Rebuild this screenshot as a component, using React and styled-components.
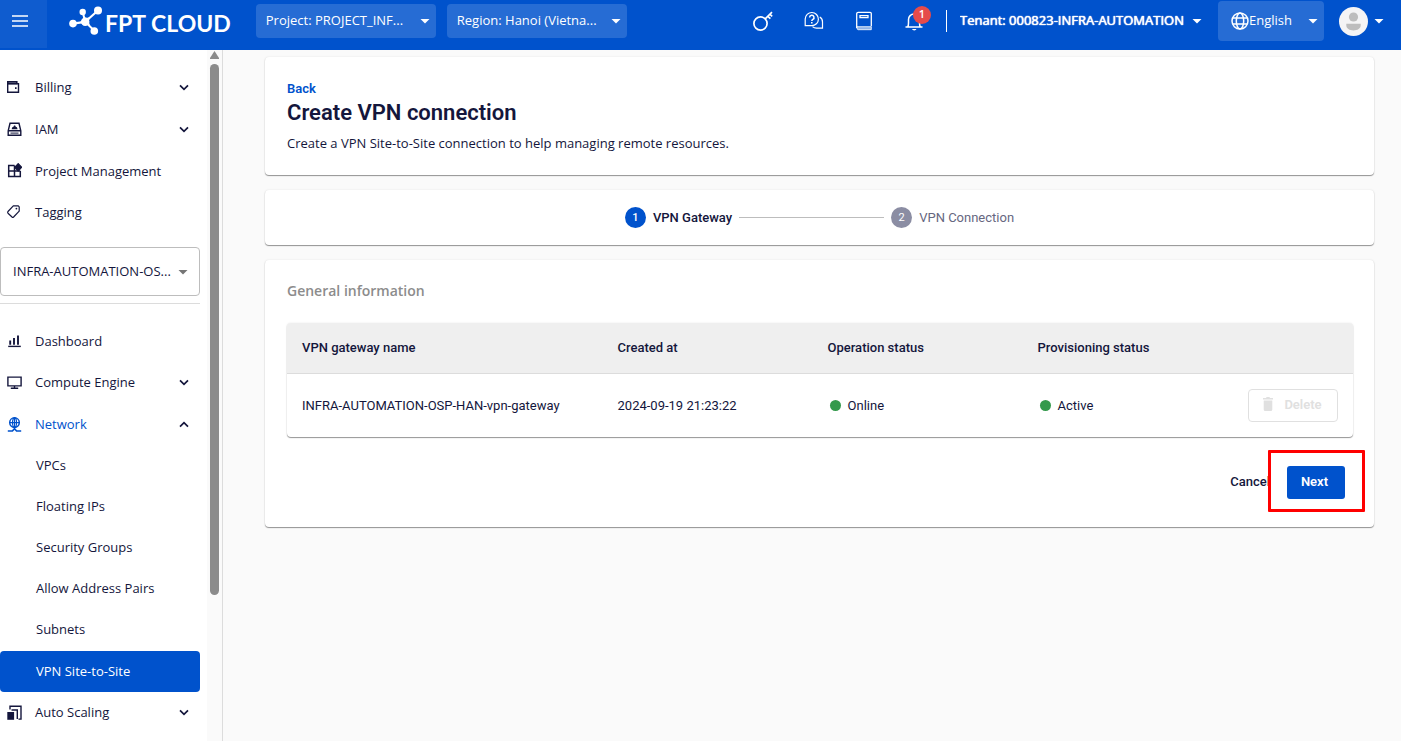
import React from "react";
import styled, { createGlobalStyle } from "styled-components";

const GlobalStyle = createGlobalStyle`
  * {
    box-sizing: border-box;
  }

  body {
    margin: 0;
    background: #fafafa;
    color: #14163c;
    font-family: "Open Sans", sans-serif;
    font-size: 13px;
  }

  button,
  select {
    font: inherit;
    color: inherit;
    margin: 0;
  }
`;

const Caret = ({ color = "#fff" }) => (
  <svg className="caret" width="10" height="5" viewBox="0 0 10 5" aria-hidden="true">
    <path d="M0.5 0h9L5 4.6z" fill={color} />
  </svg>
);

const Chevron = ({ up }) => (
  <svg width="10" height="7" viewBox="0 0 10 7" fill="none" stroke="#14163c" strokeWidth="1.7" aria-hidden="true">
    <path d={up ? "M1 5.6 5 1.6l4 4" : "M1 1.4l4 4 4-4"} />
  </svg>
);

const LogoMark = () => (
  <svg width="34" height="30" viewBox="0 0 34 30" aria-hidden="true">
    <g stroke="#fff" fill="none">
      <path d="M4 17.6 16 15.8" strokeWidth="2.2" />
      <path d="M13.7 6 16 15" strokeWidth="2" />
      <path d="M29 4.5 16.500 15.500" strokeWidth="2.2" />
      <path d="M16.500 16 25.500 25" strokeWidth="2" />
    </g>
    <g fill="#fff">
      <circle cx="4" cy="17.6" r="3.8" />
      <circle cx="13.7" cy="6" r="3.2" />
      <circle cx="29" cy="4.5" r="4" />
      <circle cx="25.3" cy="25" r="3.8" />
      <circle cx="16.200" cy="15.800" r="4.200" />
      <path d="M10.500 16.600l4-3.600.6-2.500 1.800 1.500 4.100-.8-1 3 .1 2.500.8 2.500-4.400-.2z" />
    </g>
  </svg>
);

const icons = {
  billing: (
    <>
      <path d="M0.700 1.700h9v2h-9z" fill="#a3a5b8" />
      <path d="M0.700 3.700v8.600h10.800V3.700z M0.700 3.700v-2h9v2" strokeWidth="1.4" />
      <path d="M8 7.300h1.600v1.600H8z" fill="currentColor" stroke="none" />
    </>
  ),
  iam: (
    <>
      <path d="M3 1.300h9l1.800 7.500v4.400H1.200V8.800z M1.200 8.800h12.600" strokeWidth="1.4" />
      <path d="M4.600 7.200 5.300 5.200l1.200-.4L7 3.400h1.200l.5 1.400 1.200.4.700 2z" fill="currentColor" stroke="none" />
      <path d="M3.500 11.100h8" strokeWidth="1" />
    </>
  ),
  project: (
    <>
      <path d="M7.500 2.500H1.700v11h11.600V8 M7.500 2.500v11 M1.700 8h11.600" strokeWidth="1.5" />
      <path d="M11.200.600l3.500 3.700-3.500 3.700-3.500-3.700z" fill="currentColor" strokeLinejoin="round" />
    </>
  ),
  tag: (
    <>
      <path d="M6.300 1.900h5l.9.900v4.400L6.600 13a1.200 1.200 0 0 1-1.600 0L1 9.200a1.400 1.400 0 0 1 0-1.700z" strokeLinejoin="round" />
      <circle cx="9.400" cy="4.600" r="0.900" fill="currentColor" stroke="none" />
    </>
  ),
  dashboard: (
    <>
      <path d="M1.200 13.400h12.600" strokeWidth="1.4" />
      <path d="M3.200 7.500v4.200M7 5v6.700M11 2.500v9.200" strokeWidth="1.9" />
    </>
  ),
  compute: (
    <>
      <path d="M.900 2.100h13.200v8.800H.900z" strokeWidth="1.4" />
      <path d="M7.500 11v2M3.800 13.300h7.400" strokeWidth="1.4" />
    </>
  ),
  network: (
    <>
      <circle cx="7.500" cy="5.600" r="4.800" strokeWidth="1.5" />
      <ellipse cx="7.500" cy="5.600" rx="2" ry="4.800" />
      <path d="M2.700 5.600h9.600M7.500.800v9.600" />
      <path d="M.800 14h4.600l2.100-2.300L9.600 14h4.600" strokeWidth="1.7" />
    </>
  ),
  scaling: (
    <>
      <path d="M3 4.500V1.300h11v12.800h-2.500" strokeWidth="1.4" />
      <path d="M4.500 5h5.800v9" strokeWidth="1.4" />
      <path d="M.300 7h6.800v7.800H.300z" fill="currentColor" stroke="none" />
    </>
  ),
};

const NavIcon = ({ name }) => (
  <svg width="15" height="15" viewBox="0 0 15 15" fill="none" stroke="currentColor" strokeWidth="1.2" aria-hidden="true">
    {icons[name]}
  </svg>
);

const KeyIcon = () => (
  <svg width="22" height="22" viewBox="0 0 22 22" fill="none" stroke="#fff" strokeWidth="1.7" aria-hidden="true">
    <circle cx="8.500" cy="13.500" r="6.600" />
    <path d="M13.200 8.800l6.800-6.600M15.800 6.300l2.600 2.400M18 4.300l2.200 2" />
  </svg>
);

const SupportIcon = () => (
  <svg width="20" height="20" viewBox="0 0 20 20" fill="none" stroke="#fff" strokeWidth="1.2" aria-hidden="true">
    <path d="M1.200 14.700V8a6.600 6.600 0 1 1 6.600 6.700z" />
    <path d="M5.600 6.400a2.200 2.200 0 1 1 3.300 1.900c-.7.400-1.100.8-1.100 1.600M7.800 11v1.500" strokeWidth="1.5" />
    <path d="M15.800 6.100a5.600 5.600 0 0 1 2.700 5v6.100h-5.700a6 6 0 0 1-4.300-1.600" />
  </svg>
);

const DocsIcon = () => (
  <svg width="18" height="20" viewBox="0 0 18 20" fill="none" stroke="#fff" strokeWidth="1.3" aria-hidden="true">
    <path d="M16.300 15.200V2.500a1.200 1.200 0 0 0-1.200-1.200H3.200A1.500 1.500 0 0 0 1.700 2.800v14.300" />
    <path d="M5 4.700h8v2H5z" />
    <path d="M2 15.700h14.300v3H3.200a1.500 1.500 0 0 1-1.200-1.500z" fill="#8fb3e8" strokeWidth="0.8" />
  </svg>
);

const BellIcon = () => (
  <svg width="20" height="20" viewBox="0 0 20 20" fill="none" stroke="#fff" strokeWidth="1.5" aria-hidden="true">
    <path d="M1.500 16h17M3.700 16c.6-1 .8-2 .8-4V8.500a5.500 5.500 0 0 1 11 0V12c0 2 .2 3 .8 4" />
    <path d="M8 18h4.500a2.300 1.800 0 0 1-4.500 0z" fill="#fff" stroke="none" />
  </svg>
);

const GlobeIcon = () => (
  <svg width="18" height="18" viewBox="0 0 18 18" fill="none" stroke="#fff" strokeWidth="1.5" aria-hidden="true">
    <circle cx="9" cy="9" r="8" />
    <ellipse cx="9" cy="9" rx="3.700" ry="8" />
    <path d="M1.800 6h14.400M1.800 12h14.400" />
  </svg>
);

const AvatarIcon = () => (
  <svg width="29" height="29" viewBox="0 0 29 29" aria-hidden="true">
    <circle cx="14.500" cy="14.500" r="14.500" fill="#f4f4f5" />
    <circle cx="14.500" cy="10" r="4.600" fill="#bdbdbd" />
    <path d="M7.300 16.700h14.400v1.600c0 3.200-3.200 5.200-7.200 5.200s-7.200-2-7.200-5.200z" fill="#bdbdbd" />
  </svg>
);

const TrashIcon = () => (
  <svg width="12" height="14" viewBox="0 0 12 14" fill="#e0e0e0" aria-hidden="true">
    <path d="M1 1h3l.6-1h2.800L8 1h3v1.600H1zM1.700 3.400h8.600V12.500A1.500 1.500 0 0 1 8.800 14H3.200a1.500 1.500 0 0 1-1.500-1.500z" />
  </svg>
);

const Header = styled.header`
  display: flex;
  align-items: flex-start;
  height: 50px;
  background: #0052cc;
  color: #fff;
`;

const MenuButton = styled.button`
  display: flex;
  align-items: center;
  justify-content: center;
  width: 47px;
  height: 48px;
  padding: 0 8px 6px 0;
  border: none;
  background: #0f5ccf;
`;

const Logo = styled.a`
  display: flex;
  align-items: center;
  gap: 2px;
  height: 42px;
  margin-left: 22px;
  color: #fff;
  font-family: Lato, sans-serif;
  font-size: 23px;
  font-weight: 700;
  line-height: 30px;
  text-decoration: none;
`;

const LogoText = styled.span`
  display: flex;
  gap: 5px;
  padding-top: 3px;
`;

const Filters = styled.div`
  display: flex;
  gap: 11px;
  margin: 4px 0 0 25px;
`;

const SelectBox = styled.label`
  position: relative;
  display: flex;
  align-items: center;
  width: ${(p) => p.$width || "auto"};
  height: ${(p) => p.$height || "34px"};
  padding-left: ${(p) => p.$inset || "0"};
  border-radius: 4px;
  background: ${(p) => (p.$filled ? "#266cd4" : "transparent")};

  select {
    flex: 1;
    min-width: 0;
    height: 100%;
    padding: 0 20px 2px 0;
    border: none;
    background: transparent;
    appearance: none;
  }

  option {
    color: #14163c;
  }

  .caret {
    position: absolute;
    right: 6px;
    top: 50%;
    margin-top: -2px;
    pointer-events: none;
  }
`;

const TenantSelect = styled(SelectBox)`
  select {
    text-shadow: 0 0 1px #fff, 0 0 1px #fff;
  }

  .caret {
    right: 2px;
  }
`;

const Tools = styled.div`
  display: flex;
  align-items: center;
  height: 42px;
  margin-left: auto;
`;

const IconRow = styled.div`
  display: flex;
  align-items: center;
  gap: 30px;
  padding-right: 22px;
  border-right: 1px solid #fff;
  height: 22px;
  margin-right: 13px;
`;

const IconButton = styled.button`
  position: relative;
  display: flex;
  align-items: center;
  justify-content: center;
  gap: 6px;
  min-width: 20px;
  padding: 0;
  border: none;
  background: none;
`;

const Badge = styled.span`
  position: absolute;
  top: -5px;
  right: -7px;
  width: 18px;
  height: 18px;
  border-radius: 50%;
  background: #e54b4b;
  color: #fff;
  font-size: 11px;
  font-weight: 600;
  line-height: 16px;
  text-align: center;
`;

const Account = styled.div`
  display: flex;
  align-items: center;
  gap: 15px;
  margin: 0 17px 0 14px;
`;

const Layout = styled.div`
  display: flex;
  height: calc(100vh - 50px);
`;

const Sidebar = styled.aside`
  display: flex;
  flex: none;
  border-right: 1px solid #dcdcdc;
  background: #fff;
  overflow: hidden;
`;

const Nav = styled.nav`
  width: 207px;
  padding: 17px 7px 0 0;
  overflow: hidden;
`;

const NavList = styled.ul`
  margin: 0;
  padding: 0;
  list-style: none;
`;

const NavRow = styled.a`
  display: flex;
  align-items: center;
  gap: 13px;
  width: 100%;
  height: ${(p) => (p.as === "button" ? "42px" : "41px")};
  padding: 0 11px 2px 7px;
  border: none;
  background: none;
  color: ${(p) => (p.$open ? "#0052cc" : "#14163c")};
  text-align: left;
  text-decoration: none;

  span {
    flex: 1;
  }
`;

const SubRow = styled(NavRow)`
  padding: 0 11px ${(p) => (p.$selected ? "2px" : "4px")} 36px;
  border-radius: 4px;
  background: ${(p) => (p.$selected ? "#0052cc" : "none")};
  color: ${(p) => (p.$selected ? "#fff" : "#14163c")};
`;

const ProjectSelect = styled(SelectBox)`
  height: 49px;
  margin: 14px 0 7px;
  padding-left: 12px;
  border: 1px solid #bdbdbd;

  .caret {
    right: 11px;
  }
`;

const Divider = styled.hr`
  margin: 0 0 17px;
  border: none;
  border-top: 1px solid #dcdcdc;
`;

const ScrollTrack = styled.div`
  display: flex;
  flex-direction: column;
  align-items: center;
  gap: 5px;
  width: 15px;
  padding-top: 1px;
  background: #fafafa;
`;

const ScrollThumb = styled.div`
  width: 9px;
  height: 77%;
  border-radius: 5px;
  background: #8b8b8b;
`;

const Main = styled.main`
  display: flex;
  flex: 1;
  flex-direction: column;
  gap: 15px;
  min-width: 0;
  padding: 7px 27px 20px 42px;
  font-family: Roboto, sans-serif;
`;

const Card = styled.section`
  padding: ${(p) => p.$padding};
  border-radius: 4px;
  background: #fff;
  box-shadow: 0 1px 1px rgba(0, 0, 0, 0.4), 0 0 2px rgba(0, 0, 0, 0.1);
`;

const BackLink = styled.a`
  display: block;
  color: #0052cc;
  font-weight: 600;
  line-height: 18px;
  text-decoration: none;
`;

const Title = styled.h1`
  margin: 0;
  font-size: 22px;
  font-weight: 600;
  line-height: 30px;
`;

const Description = styled.p`
  margin: 5px 0 0;
  font-family: "Open Sans", sans-serif;
  line-height: 20px;
`;

const Stepper = styled.ol`
  display: flex;
  align-items: center;
  justify-content: center;
  gap: 7px;
  margin: 0;
  padding: 0;
  list-style: none;
`;

const Step = styled.li`
  display: flex;
  align-items: center;
  gap: 7px;
  color: ${(p) => (p.$active ? "#14163c" : "#66677f")};
  font-weight: ${(p) => (p.$active ? 500 : 400)};

  span {
    width: 21px;
    height: 21px;
    border-radius: 50%;
    background: ${(p) => (p.$active ? "#0052cc" : "#8b8da3")};
    color: #fff;
    font-size: 11px;
    line-height: 21px;
    text-align: center;
  }
`;

const StepLine = styled.li`
  width: 145px;
  border-top: 1px solid #bdbdbd;
`;

const SectionTitle = styled.h2`
  margin: 0 0 22px;
  color: #8c8c8c;
  font-family: "Open Sans", sans-serif;
  font-size: 14px;
  font-weight: 600;
  line-height: 20px;
`;

const Table = styled.table`
  width: 100%;
  border-collapse: separate;
  border-spacing: 0;
  border-radius: 4px;
  table-layout: fixed;
  box-shadow: 0 1px 1px rgba(0, 0, 0, 0.4), 0 0 2px rgba(0, 0, 0, 0.1);
  overflow: hidden;

  th,
  td {
    padding: 0 15px 1px;
    text-align: left;
  }

  th {
    height: 51px;
    border-bottom: 1px solid #dcdcdc;
    background: #efefef;
    font-weight: 500;
  }

  td {
    height: 63px;
  }

  td:last-child {
    text-align: right;
  }
`;

const Status = styled.span`
  display: flex;
  align-items: center;
  gap: 7px;
  padding-left: 2px;

  &::before {
    content: "";
    width: 11px;
    height: 11px;
    border-radius: 50%;
    background: #34994c;
  }
`;

const DeleteButton = styled.button`
  display: inline-flex;
  align-items: center;
  justify-content: center;
  gap: 10px;
  width: 90px;
  height: 33px;
  padding: 0 2px 2px 0;
  border: 1px solid #e0e0e0;
  border-radius: 4px;
  background: #fff;
  color: #e0e0e0;
  font-weight: 600;
`;

const Actions = styled.div`
  display: flex;
  align-items: center;
  justify-content: flex-end;
  gap: 17px;
  margin-top: 29px;
  padding-right: 8px;
`;

const CancelButton = styled.button`
  padding: 0 0 2px;
  border: none;
  background: none;
  font-weight: 500;
`;

const NextButton = styled.button`
  width: 58px;
  height: 33px;
  padding: 0 3px 2px 0;
  border: none;
  border-radius: 3px;
  background: #0052cc;
  color: #fff;
  font-weight: 600;
`;

const Highlight = styled.div`
  position: relative;
  display: flex;

  &::after {
    content: "";
    position: absolute;
    inset: -16px -20px -13px -19px;
    border: 3px solid #f00;
    border-radius: 1px;
    pointer-events: none;
  }
`;

const accountItems = [
  { icon: "billing", label: "Billing", expandable: true },
  { icon: "iam", label: "IAM", expandable: true },
  { icon: "project", label: "Project Management" },
  { icon: "tag", label: "Tagging" },
];

const serviceItems = [
  { icon: "dashboard", label: "Dashboard" },
  { icon: "compute", label: "Compute Engine", expandable: true },
  {
    icon: "network",
    label: "Network",
    expandable: true,
    children: ["VPCs", "Floating IPs", "Security Groups", "Allow Address Pairs", "Subnets", "VPN Site-to-Site"],
  },
  { icon: "scaling", label: "Auto Scaling", expandable: true },
];

const NavItems = ({ items }) => (
  <NavList>
    {items.map(({ icon, label, expandable, children }) => (
      <li key={label}>
        {expandable ? (
          <NavRow as="button" type="button" aria-expanded={!!children} $open={!!children}>
            <NavIcon name={icon} />
            <span>{label}</span>
            <Chevron up={!!children} />
          </NavRow>
        ) : (
          <NavRow href="#">
            <NavIcon name={icon} />
            <span>{label}</span>
          </NavRow>
        )}
        {children && (
          <NavList>
            {children.map((child) => (
              <li key={child}>
                <SubRow href="#" $selected={child === "VPN Site-to-Site"}>
                  {child}
                </SubRow>
              </li>
            ))}
          </NavList>
        )}
      </li>
    ))}
  </NavList>
);

const TopBar = () => (
  <Header>
    <MenuButton type="button" aria-label="Menu">
      <svg width="16" height="12" viewBox="0 0 16 12" stroke="#fff" strokeWidth="1.7" aria-hidden="true">
        <path d="M0 1h16M0 6h16M0 11h16" />
      </svg>
    </MenuButton>
    <Logo href="#">
      <LogoMark />
      <LogoText>
        <span>FPT</span>
        <span>CLOUD</span>
      </LogoText>
    </Logo>
    <Filters>
      <SelectBox $filled $width="180px" $inset="10px">
        <select aria-label="Project">
          <option>Project: PROJECT_INF...</option>
        </select>
        <Caret />
      </SelectBox>
      <SelectBox $filled $width="180px" $inset="10px">
        <select aria-label="Region">
          <option>Region: Hanoi (Vietna...</option>
        </select>
        <Caret />
      </SelectBox>
    </Filters>
    <Tools>
      <IconRow>
        <IconButton type="button" aria-label="Access keys">
          <KeyIcon />
        </IconButton>
        <IconButton type="button" aria-label="Support">
          <SupportIcon />
        </IconButton>
        <IconButton type="button" aria-label="Documentation">
          <DocsIcon />
        </IconButton>
        <IconButton type="button" aria-label="Notifications">
          <BellIcon />
          <Badge>1</Badge>
        </IconButton>
      </IconRow>
      <TenantSelect>
        <select aria-label="Tenant">
          <option>Tenant: 000823-INFRA-AUTOMATION</option>
        </select>
        <Caret />
      </TenantSelect>
      <Account>
        <SelectBox $filled $width="106px" $height="40px" $inset="13px">
          <GlobeIcon />
          <select aria-label="Language">
            <option>English</option>
          </select>
          <Caret />
        </SelectBox>
        <IconButton type="button" aria-label="Account">
          <AvatarIcon />
          <Caret />
        </IconButton>
      </Account>
    </Tools>
  </Header>
);

const GatewayTable = () => (
  <Table>
    <colgroup>
      <col style={{ width: "29.6%" }} />
      <col style={{ width: "19.7%" }} />
      <col style={{ width: "19.7%" }} />
      <col style={{ width: "19.7%" }} />
      <col />
    </colgroup>
    <thead>
      <tr>
        <th>VPN gateway name</th>
        <th>Created at</th>
        <th>Operation status</th>
        <th>Provisioning status</th>
        <th aria-label="Actions" />
      </tr>
    </thead>
    <tbody>
      <tr>
        <td>INFRA-AUTOMATION-OSP-HAN-vpn-gateway</td>
        <td>2024-09-19 21:23:22</td>
        <td>
          <Status>Online</Status>
        </td>
        <td>
          <Status>Active</Status>
        </td>
        <td>
          <DeleteButton type="button" disabled>
            <TrashIcon />
            Delete
          </DeleteButton>
        </td>
      </tr>
    </tbody>
  </Table>
);

const App = () => {
  return (
    <>
      <GlobalStyle />
      <TopBar />
      <Layout>
        <Sidebar>
          <Nav>
            <NavItems items={accountItems} />
            <ProjectSelect>
              <select aria-label="Current project">
                <option>INFRA-AUTOMATION-OS...</option>
              </select>
              <Caret color="#757575" />
            </ProjectSelect>
            <Divider />
            <NavItems items={serviceItems} />
          </Nav>
          <ScrollTrack>
            <svg width="9" height="8" viewBox="0 0 9 8" aria-hidden="true">
              <path d="M4.500 0 9 7v1H0V7z" fill="#8b8b8b" />
            </svg>
            <ScrollThumb />
          </ScrollTrack>
        </Sidebar>
        <Main>
          <Card $padding="23px 22px 22px">
            <BackLink href="#">Back</BackLink>
            <Title>Create VPN connection</Title>
            <Description>Create a VPN Site-to-Site connection to help managing remote resources.</Description>
          </Card>
          <Card $padding="17px 22px">
            <Stepper>
              <Step $active>
                <span>1</span>
                VPN Gateway
              </Step>
              <StepLine aria-hidden="true" />
              <Step>
                <span>2</span>
                VPN Connection
              </Step>
            </Stepper>
          </Card>
          <Card $padding="21px 21px 28px 22px">
            <SectionTitle>General information</SectionTitle>
            <GatewayTable />
            <Actions>
              <CancelButton type="button">Cancel</CancelButton>
              <Highlight>
                <NextButton type="button">Next</NextButton>
              </Highlight>
            </Actions>
          </Card>
        </Main>
      </Layout>
    </>
  );
};

export default App;
